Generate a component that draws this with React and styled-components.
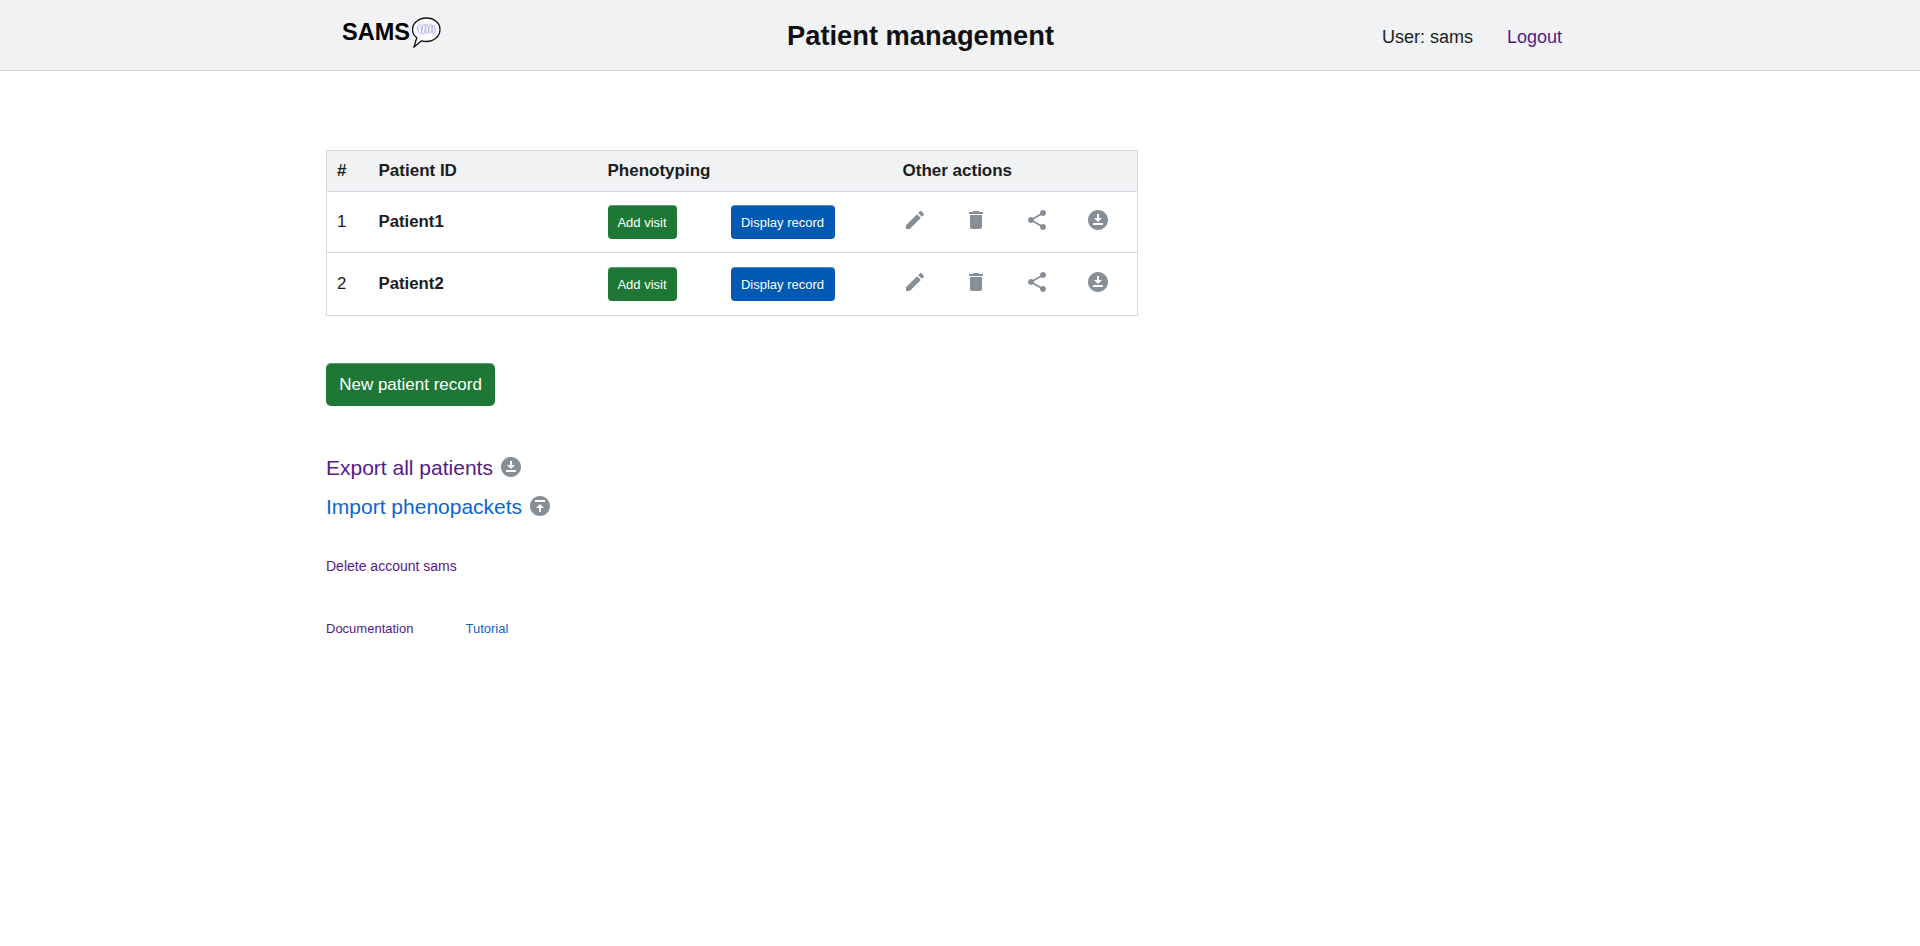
import React from "react";
import styled, { createGlobalStyle } from "styled-components";

const Global = createGlobalStyle`
  html, body { margin: 0; padding: 0; background: #fff; }
  body { font-family: "Liberation Sans", Arial, sans-serif; color: #1a1d20; font-size: 16px; line-height: 1.5; }
  a { text-decoration: none; }
`;

const Header = styled.header`
  height: 70px;
  background: #f1f2f4;
  border-bottom: 1px solid #d5d9de;
`;
const HeaderInner = styled.div`
  width: 1268px;
  margin: 0 auto;
  height: 100%;
  display: grid;
  grid-template-columns: 461px 595px auto auto;
  justify-content: start;
  align-items: center;
`;
const Brand = styled.div`
  display: flex;
  align-items: center;
  padding: 0 0 5px 16px;
  font-size: 23.5px;
  font-weight: 700;
  color: #000;
`;
const Title = styled.h1`
  margin: 0;
  padding-top: 2px;
  font-size: 27.3px;
  line-height: 34px;
  font-weight: 700;
  color: #111;
`;
const UserName = styled.span`
  padding-top: 4px;
  font-size: 18px;
  color: #1a1d20;
`;
const HeaderLink = styled.a`
  margin-left: 34px;
  padding-top: 4px;
  font-size: 18px;
  color: #551a8b;
`;

const Main = styled.main`
  width: 1268px;
  margin: 0 auto;
  padding-top: 79px;
`;
const Table = styled.table`
  width: 812px;
  table-layout: fixed;
  border-collapse: collapse;
  border: 1px solid #d5d9de;
`;
const HeadCell = styled.th`
  height: 40px;
  padding: 0 10px;
  background: #f1f2f4;
  border-bottom: 1px solid #d5d9de;
  text-align: left;
  font-size: 17px;
  font-weight: 700;
  color: #1a1d20;
`;
const Cell = styled.td`
  height: ${(p) => p.$h}px;
  padding: 0 10px;
  font-size: 16.8px;
  font-weight: ${(p) => (p.$bold ? 700 : 400)};
  border-bottom: 1px solid #d5d9de;
  color: #1a1d20;
`;
const ActionRow = styled.div`
  display: flex;
  align-items: center;
`;
const SmallButton = styled.button`
  display: block;
  height: 34px;
  margin-right: ${(p) => p.$gap || 0}px;
  padding: 0;
  width: ${(p) => p.$w}px;
  border: 0;
  border-radius: 4px;
  color: #fff;
  font-family: inherit;
  font-size: 13px;
  background: ${(p) => (p.$blue ? "#0059b3" : "#1e7735")};
  box-shadow: inset 0 1px 0 rgba(255, 255, 255, 0.3);
`;
const IconSlot = styled.span`
  display: block;
  width: 24px;
  height: 24px;
  margin-right: ${(p) => p.$gap || 0}px;
  margin-top: -5px;
`;
const IconSvg = styled.svg`
  display: block;
  fill: #868e96;
`;
const LinkIcon = styled.span`
  display: block;
  margin-top: 2px;
`;
const NewButton = styled.button`
  display: block;
  margin-top: 47px;
  width: 169px;
  height: 43px;
  padding: 0;
  border: 0;
  border-radius: 5px;
  background: #1e7735;
  color: #fff;
  font-family: inherit;
  font-size: 17px;
  box-shadow: inset 0 1px 0 rgba(255, 255, 255, 0.3);
`;
const LinkList = styled.div`
  margin-top: 47px;
  display: flex;
  flex-direction: column;
  gap: 9px;
`;
const BigLinkRow = styled.div`
  display: flex;
  align-items: flex-start;
  height: 30px;
  gap: 6px;
`;
const BigLink = styled.a`
  font-size: 21px;
  line-height: 30px;
  color: ${(p) => (p.$visited ? "#551a8b" : "#0a66cc")};
`;
const SmallLink = styled.a`
  display: block;
  font-size: ${(p) => p.$size || 14}px;
  line-height: 20px;
  color: ${(p) => (p.$visited ? "#551a8b" : "#0a66cc")};
`;
const AccountRow = styled.div`
  margin-top: 34px;
`;
const FooterRow = styled.div`
  margin-top: 43px;
  display: flex;
  gap: 52px;
`;

const paths = {
  edit: "M3 17.25V21h3.75L17.81 9.94l-3.75-3.75L3 17.25zM20.71 7.04c.39-.39.39-1.02 0-1.41l-2.34-2.34c-.39-.39-1.02-.39-1.41 0l-1.83 1.83 3.75 3.75 1.83-1.83z",
  trash: "M6 19c0 1.1.9 2 2 2h8c1.1 0 2-.9 2-2V7H6v12zM19 4h-3.5l-1-1h-5l-1 1H5v2h14V4z",
  share: "M18 16.08c-.76 0-1.44.3-1.96.77L8.91 12.7c.05-.23.09-.46.09-.7s-.04-.47-.09-.7l7.05-4.11c.54.5 1.25.81 2.04.81 1.66 0 3-1.34 3-3s-1.34-3-3-3-3 1.34-3 3c0 .24.04.47.09.7L8.04 9.81C7.5 9.31 6.79 9 6 9c-1.66 0-3 1.34-3 3s1.34 3 3 3c.79 0 1.5-.31 2.04-.81l7.12 4.16c-.05.21-.08.43-.08.65 0 1.61 1.31 2.92 2.92 2.92s2.92-1.31 2.92-2.92-1.31-2.92-2.92-2.92z",
  download: "M12 2C6.49 2 2 6.49 2 12s4.49 10 10 10 10-4.49 10-10S17.51 2 12 2zm-1 8V6h2v4h3l-4 4-4-4h3zm6 7H7v-2h10v2z",
  upload: "M12 2C6.49 2 2 6.49 2 12s4.49 10 10 10 10-4.49 10-10S17.51 2 12 2zM7 6h10v2H7V6zm6 8v4h-2v-4H8l4-4 4 4h-3z",
};

const Icon = ({ name }) => (
  <IconSvg width="24" height="24" viewBox="0 0 24 24">
    <path fillRule="evenodd" d={paths[name]} />
  </IconSvg>
);

const LogoSvg = styled.svg`
  display: block;
  margin-top: 0;
  margin-left: 1px;
`;

const Logo = () => (
  <LogoSvg width="30" height="31" viewBox="0 0 30 31">
    <path
      d="M15.500 1C8 1 1.500 5.800 1.500 12.500c0 3.500 1.700 6.300 4.300 8.300L3 30l7.700-6.200c1.500.5 3 .7 4.800.7 7.500 0 13.500-5.300 13.500-12S23 1 15.500 1z"
      fill="#fbfbfe"
      stroke="#111"
      strokeWidth="1.300"
    />
    <path
      d="M6 13c1-5 2.500-7 3.500-5s1 10 3 9 2-11 3.500-10 1.500 10 3.500 9 1.500-9 3-8 1.200 5 2 5"
      fill="none"
      stroke="#b1b1ea"
      strokeWidth="1"
    />
    <path
      d="M6 9c1.500 3 1.500 8 3.500 8s1.500-10 3.500-10 1.500 10 3 10 2-10 3.500-10 1.500 10 3 10 1-3 2-5"
      fill="none"
      stroke="#b1b1ea"
      strokeWidth="1"
    />
  </LogoSvg>
);

const rows = ["Patient1", "Patient2"];
const icons = ["edit", "trash", "share", "download"];

export default function App() {
  return (
    <>
      <Global />
      <Header>
        <HeaderInner>
          <Brand>
            SAMS
            <Logo />
          </Brand>
          <Title>Patient management</Title>
          <UserName>User: sams</UserName>
          <HeaderLink href="#">Logout</HeaderLink>
        </HeaderInner>
      </Header>
      <Main>
        <Table>
          <colgroup>
            <col style={{ width: 42 }} />
            <col style={{ width: 229 }} />
            <col style={{ width: 295 }} />
            <col />
          </colgroup>
          <thead>
            <tr>
              <HeadCell>#</HeadCell>
              <HeadCell>Patient ID</HeadCell>
              <HeadCell>Phenotyping</HeadCell>
              <HeadCell>Other actions</HeadCell>
            </tr>
          </thead>
          <tbody>
            {rows.map((r, i) => {
              const h = i === 0 ? 60 : 62;
              return (
                <tr key={r}>
                  <Cell $h={h}>{i + 1}</Cell>
                  <Cell $h={h} $bold>{r}</Cell>
                  <Cell $h={h}>
                    <ActionRow>
                      <SmallButton $w={69} $gap={54}>Add visit</SmallButton>
                      <SmallButton $w={104} $blue>Display record</SmallButton>
                    </ActionRow>
                  </Cell>
                  <Cell $h={h}>
                    <ActionRow>
                      {icons.map((n, k) => (
                        <IconSlot key={n} $gap={k < 3 ? 37 : 0}>
                          <Icon name={n} />
                        </IconSlot>
                      ))}
                    </ActionRow>
                  </Cell>
                </tr>
              );
            })}
          </tbody>
        </Table>
        <NewButton>New patient record</NewButton>
        <LinkList>
          <BigLinkRow>
            <BigLink href="#" $visited>Export all patients</BigLink>
            <LinkIcon><Icon name="download" /></LinkIcon>
          </BigLinkRow>
          <BigLinkRow>
            <BigLink href="#">Import phenopackets</BigLink>
            <LinkIcon><Icon name="upload" /></LinkIcon>
          </BigLinkRow>
        </LinkList>
        <AccountRow>
          <SmallLink href="#" $visited>Delete account sams</SmallLink>
        </AccountRow>
        <FooterRow>
          <SmallLink href="#" $visited $size={13}>Documentation</SmallLink>
          <SmallLink href="#" $size={13}>Tutorial</SmallLink>
        </FooterRow>
      </Main>
    </>
  );
}
